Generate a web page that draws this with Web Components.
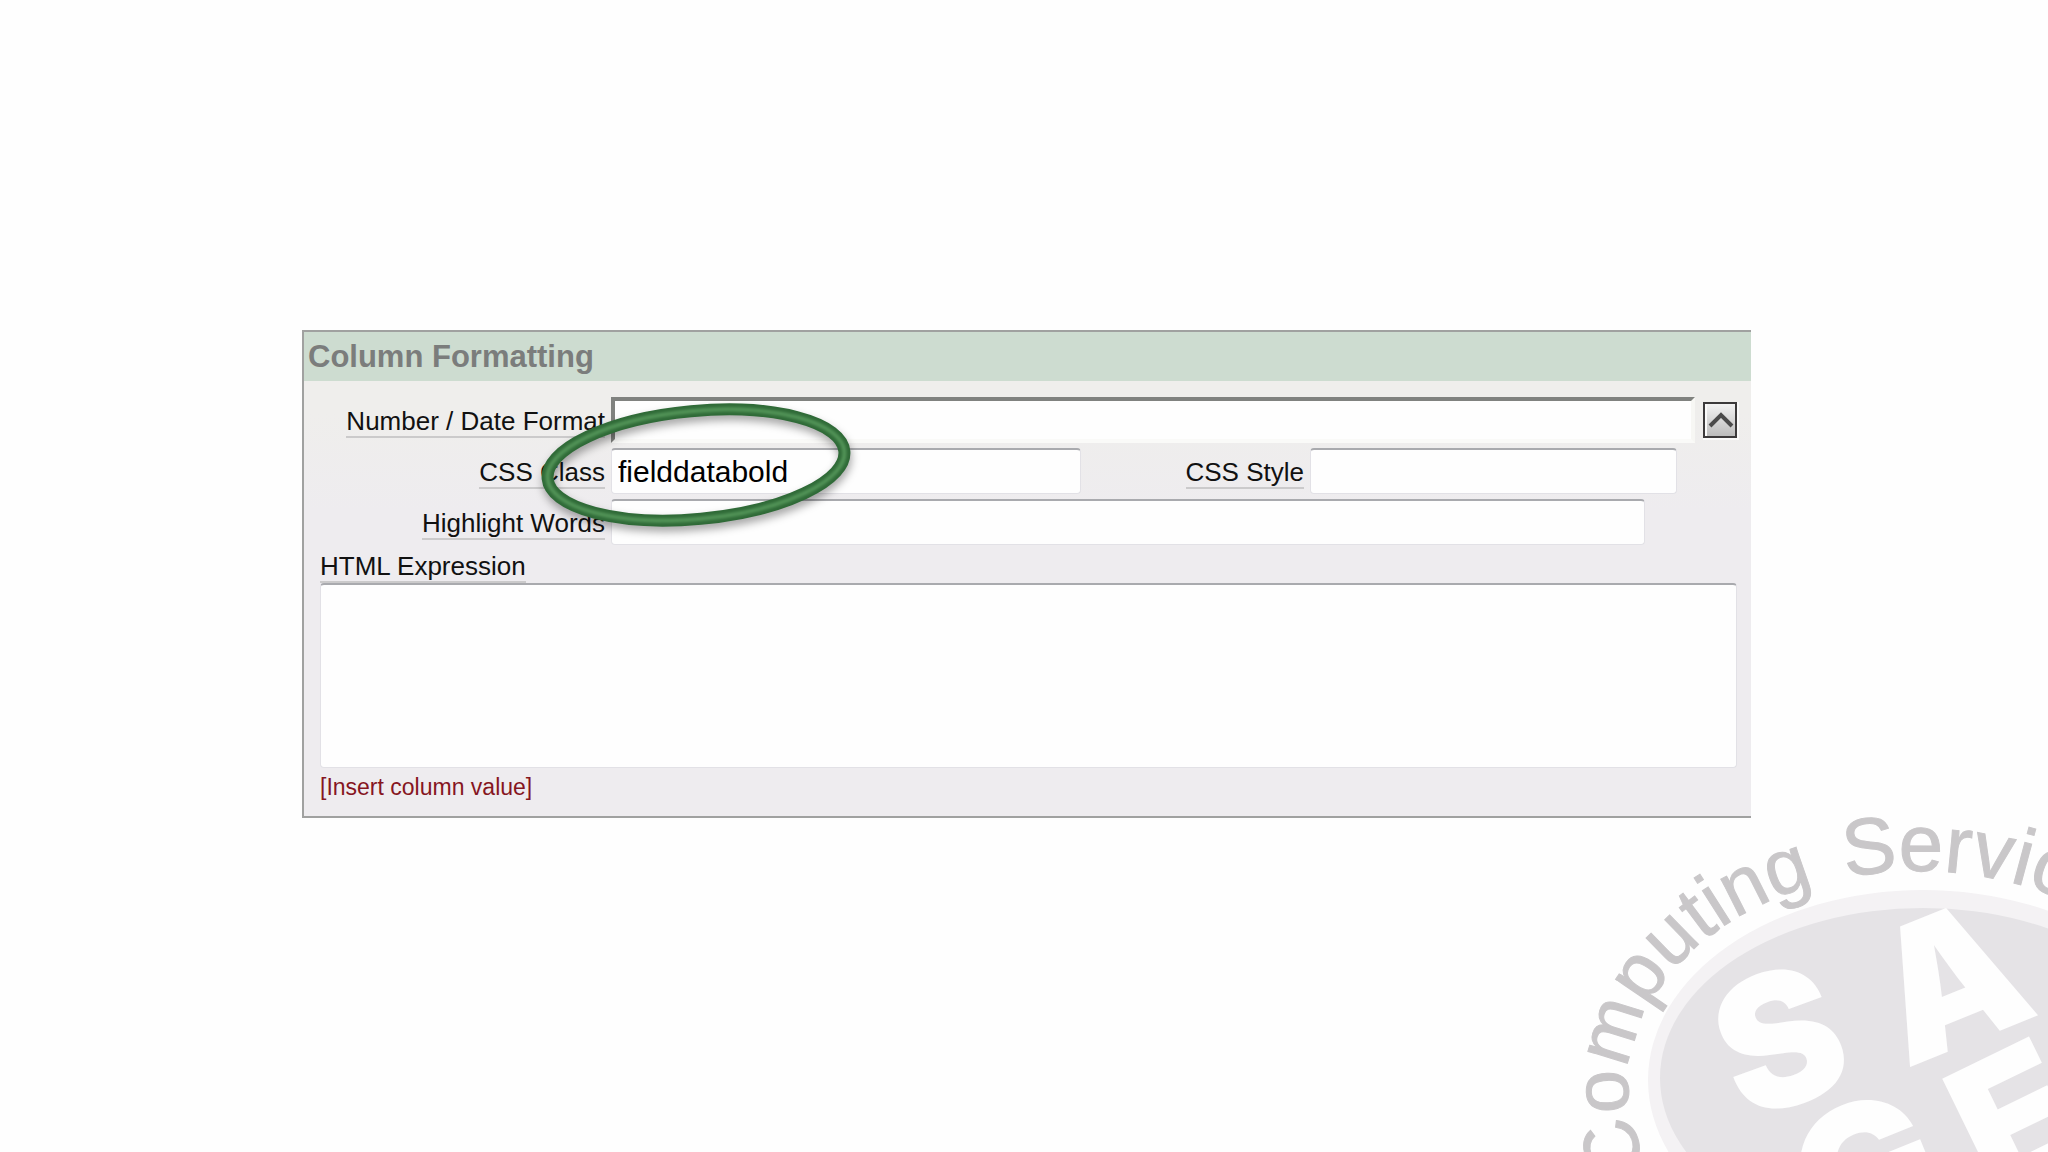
<!DOCTYPE html>
<html lang="en">
<head>
<meta charset="utf-8">
<title>Column Formatting</title>
<style>
  body {
    margin: 0;
    min-height: 100vh;
    box-sizing: border-box;
    padding: 330px 297px 0 302px;
    position: relative;
    overflow: hidden;
    background-color: #fefefe;
    font-family: "Liberation Sans", Arial, sans-serif;
    font-size: 26px;
    color: #111;
  }
</style>
</head>
<body>
<seal-watermark></seal-watermark>
<format-panel heading="Column Formatting">
  <field-row>
    <text-field label="Number / Date Format" kind="inset" lead></text-field>
    <popup-button label="Choose format"></popup-button>
  </field-row>
  <field-row class="css">
    <text-field label="CSS Class" value="fielddatabold" span="470" lead></text-field>
    <text-field label="CSS Style" span="367"></text-field>
    <marker-ring slot="over"></marker-ring>
  </field-row>
  <field-row>
    <text-field label="Highlight Words" span="1034" lead></text-field>
  </field-row>
  <area-field label="HTML Expression"></area-field>
  <action-link>[Insert column value]</action-link>
</format-panel>

<script>
const define = (name, template) => customElements.define(
  name,
  class extends HTMLElement {
    constructor() {
      super();
      this.shadow = this.attachShadow({ mode: "open" });
    }

    connectedCallback() {
      this.shadow.innerHTML = template(this);
    }
  }
);

const attr = (el, name) => el.getAttribute(name) || "";

const labelStyle = `
      label {
        line-height: 30px;
        border-bottom: 2px solid #cbcacb;
        white-space: nowrap;
      }
`;

const boxStyle = `
        box-sizing: border-box;
        margin: 0;
        padding: 0 6px;
        border: 1px solid #e2e1e6;
        border-top: 2px solid #a9aaae;
        border-radius: 4px;
        background-color: #fefefe;
        font: inherit;
        color: #000;
        outline: none;
`;

define("format-panel", (el) => `
    <style>
      :host {
        display: block;
        position: relative;
        border: 2px solid #a0a1a0;
        border-right: none;
        background: linear-gradient(#efeeec 50px, #efeeec 80px, #eeecef 180px);
      }
      h2 {
        margin: 0;
        padding: 0 4px;
        background-color: #cddcd0;
        color: #7b7d7c;
        font-size: 31px;
        line-height: 49px;
      }
      #body {
        display: flex;
        flex-direction: column;
        gap: 5px;
        padding: 16px 14px 15px 16px;
      }
    </style>
    <h2>${attr(el, "heading")}</h2>
    <div id="body"><slot></slot></div>
`);

define("field-row", () => `
    <style>
      :host {
        display: flex;
        align-items: center;
        gap: 8px;
        height: 46px;
        position: relative;
      }
      :host(.css) {
        justify-content: space-between;
        padding-right: 60px;
      }
    </style>
    <slot></slot>
    <slot name="over"></slot>
`);

define("text-field", (el) => `
    <style>
      :host {
        display: flex;
        align-items: center;
        gap: 6px;
        height: 46px;
        ${attr(el, "span") ? "" : "flex: 1;"}
      }
      #label {
        ${el.hasAttribute("lead") ? "width: 285px;" : ""}
        display: flex;
        justify-content: flex-end;
        padding-top: 4px;
      }
      ${labelStyle}
      input {
        ${boxStyle}
        height: 46px;
        min-width: 0;
        font-size: 30px;
        ${attr(el, "span") ? `width: ${attr(el, "span")}px;` : "flex: 1;"}
      }
      input.inset {
        border: 4px solid #80827f;
        border-right-color: #f7f7f4;
        border-bottom-color: #fafaf8;
        border-radius: 0;
      }
    </style>
    <div id="label"><label for="field">${attr(el, "label")}</label></div>
    <input id="field" type="text" class="${attr(el, "kind")}" value="${attr(el, "value")}" spellcheck="false">
`);

define("popup-button", (el) => `
    <style>
      :host {
        display: block;
      }
      button {
        display: block;
        box-sizing: border-box;
        width: 34px;
        height: 36px;
        margin: 0;
        padding: 0;
        border: 2px solid #3c3a3b;
        background: linear-gradient(#f3f3f3, #bcbcbc);
        box-shadow: inset 2px 0 #fafafa, 1px 1px 0 1px #fafafa;
      }
      svg {
        display: block;
        width: 30px;
        height: 32px;
      }
    </style>
    <button type="button" aria-label="${attr(el, "label")}">
      <svg viewBox="0 0 30 32"><path d="M5 22L16 11L27 22" fill="none" stroke="#4b4b4b" stroke-width="4"/></svg>
    </button>
`);

define("area-field", (el) => `
    <style>
      :host {
        display: flex;
        flex-direction: column;
        align-items: flex-start;
        padding-top: 1px;
      }
      ${labelStyle}
      textarea {
        ${boxStyle}
        display: block;
        width: 100%;
        height: 185px;
        resize: none;
      }
    </style>
    <label for="area">${attr(el, "label")}</label>
    <textarea id="area" spellcheck="false"></textarea>
`);

define("action-link", () => `
    <style>
      :host {
        display: block;
        font-size: 23px;
        line-height: 28px;
      }
      a {
        color: #86161f;
        text-decoration: none;
      }
    </style>
    <a href="#"><slot></slot></a>
`);

// Green marker drawn round the class name
define("marker-ring", () => `
    <style>
      :host {
        position: absolute;
        z-index: 1;
        left: 211px;
        top: -53px;
        pointer-events: none;
      }
      svg {
        display: block;
        width: 330px;
        height: 150px;
        filter: drop-shadow(1px 5px 4px rgba(0,0,0,0.35));
      }
    </style>
    <svg viewBox="0 0 330 150" fill="none">
      <defs>
        <filter id="soft" x="-10%" y="-10%" width="120%" height="120%"><feGaussianBlur stdDeviation="1.5"/></filter>
      </defs>
      <g transform="rotate(-5.3 165 70)">
        <ellipse cx="165" cy="70" rx="149" ry="54" stroke="#2f6a37" stroke-width="12"/>
        <ellipse cx="165" cy="70" rx="149" ry="54" stroke="#55975a" stroke-width="4" filter="url(#soft)"/>
      </g>
    </svg>
`);

define("seal-watermark", () => `
    <style>
      :host {
        position: absolute;
        right: 0;
        bottom: 0;
      }
      svg {
        display: block;
        width: 488px;
        height: 340px;
      }
      .rim {
        font-family: "Liberation Sans", Arial, sans-serif;
        fill: #c9c7c9;
        stroke: #c9c7c9;
      }
      .core {
        font-family: Inter, "Liberation Sans", sans-serif;
        font-weight: 900;
        fill: #fefefe;
        text-anchor: middle;
      }
    </style>
    <svg viewBox="0 0 488 340">
      <defs>
        <path id="arc" d="M358 487A290 214 0 0 1 68 273A290 214 0 0 1 358 59A290 214 0 0 1 648 273"/>
      </defs>
      <ellipse cx="363" cy="268" rx="275" ry="190" fill="#f4f2f4"/>
      <ellipse cx="363" cy="266" rx="263" ry="170" fill="#e5e3e6"/>
      <g class="core" font-size="184">
        <text transform="translate(242 290) rotate(-20)">S</text>
        <text transform="translate(414 229) rotate(-22)">A</text>
        <text transform="translate(330 420) rotate(-22)">G</text>
        <text transform="translate(484 366) rotate(-26)">E</text>
      </g>
      <g class="rim">
        <text font-size="78"><textPath href="#arc" startOffset="314">Computing</textPath></text>
        <text font-size="80"><textPath href="#arc" startOffset="723">Services</textPath></text>
      </g>
    </svg>
`);
</script>
</body>
</html>
